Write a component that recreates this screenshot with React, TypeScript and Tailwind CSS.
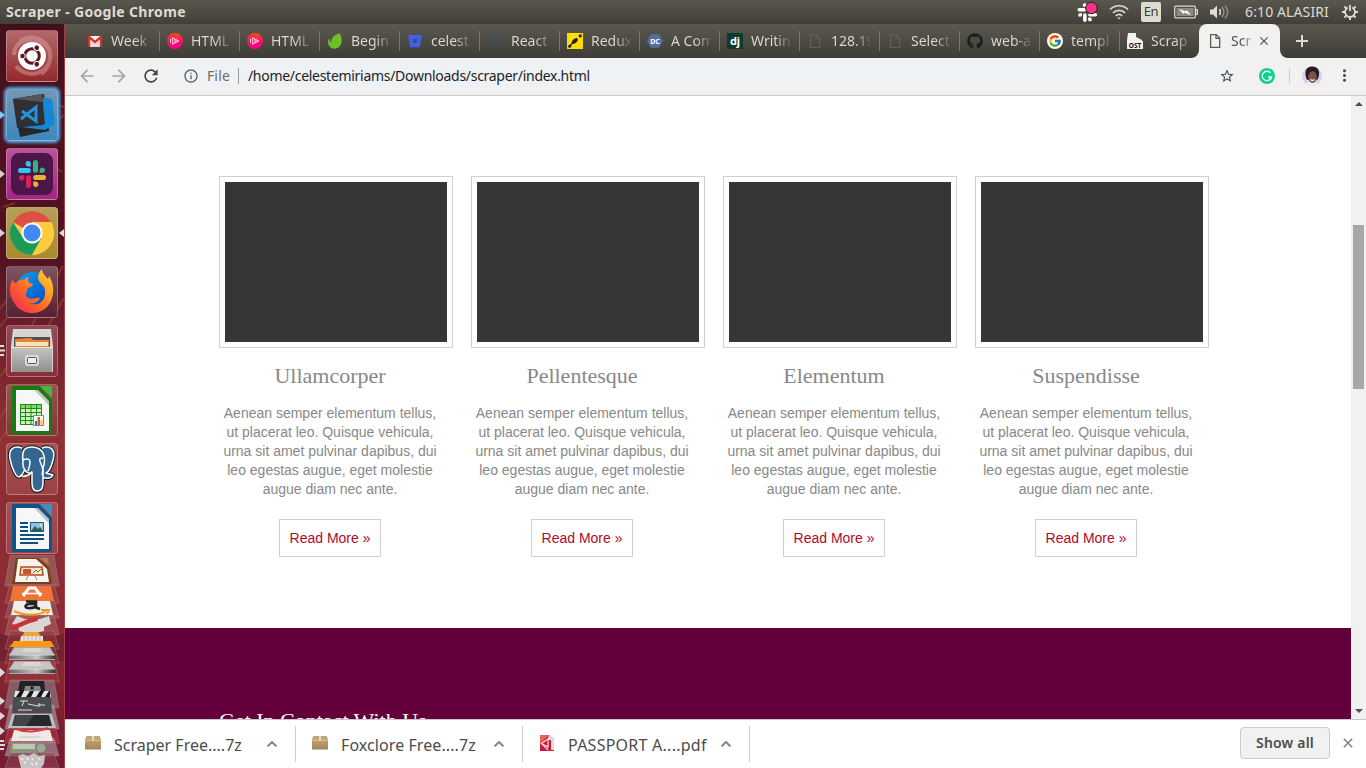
import React from 'react';
import { MdArrowBack, MdArrowForward, MdRefresh, MdStarBorder, MdInfoOutline, MdMoreVert, MdClose } from 'react-icons/md';
import { FaBitbucket, FaGithub, FaReact } from 'react-icons/fa';
import { FcGoogle } from 'react-icons/fc';

const SlackMark = ({ mono = false }: { mono?: boolean }) => {
  const c = mono ? ['#fff', '#fff', '#fff', '#fff'] : ['#36c5f0', '#2eb67d', '#ecb22e', '#e01e5a'];
  return (
    <g>
      {[0, 90, 180, 270].map((r, i) => (
        <g key={r} transform={`rotate(${r} 14 14)`} fill={c[i]}>
          <rect x="0" y="8" width="12.8" height="5" rx="2.5" />
          <path d="M12.8 6.4V3a2.700 2.700 0 1 0-2.700 3.400z" />
        </g>
      ))}
    </g>
  );
};

const GmailIcon = () => (
  <svg viewBox="0 0 16 16" className="size-4">
    <path d="M1 3h14v11H1z" fill="#f4f2f0" />
    <path d="M3.500 6l4.500 4 4.500-4v8H3.500z" fill="#dedbd8" />
    <path d="M1 14V2.800h1.500L8 7.500l5.500-4.700H15V14h-2.200V6.500L8 10.500l-4.800-4V14z" fill="#d93025" />
  </svg>
);
const PinkIcon = () => (
  <svg viewBox="0 0 16 16" className="size-4">
    <defs><linearGradient id="pk" x2="0" y2="1"><stop stopColor="#ff4a1c" /><stop offset=".6" stopColor="#f9087c" /></linearGradient></defs>
    <circle cx="8" cy="8" r="8" fill="url(#pk)" />
    <path d="M3.500 5.800v4.400M5.700 4.500v7M5.700 5l6.300 3-6.300 3M8 6v4M8 8h3" stroke="#ffe2ee" strokeWidth=".9" fill="none" />
  </svg>
);
const LeafIcon = () => (
  <svg viewBox="0 0 16 16" className="size-4">
    <path d="M12.800.4c1.800 3 3 8.800.2 12.600-2.500 3.400-7.700 3.800-10.300.6C.5 10.800.7 7.500 2.600 5c.5 2 .5 3.500 1.400 5C4.100 4.500 8.200 1 12.800.4z" fill="#6fbf2c" />
  </svg>
);
const ReduxIcon = () => (
  <svg viewBox="0 0 16 16" className="size-4">
    <path d="M0 0h16v16H0z" fill="#ffdd00" />
    <path d="M2.200 13.800l5-5.500 3-3" stroke="#222" strokeWidth="1.500" fill="none" />
    <circle cx="2.600" cy="13.200" r="1.500" fill="#222" />
    <ellipse cx="7.800" cy="8" rx="3.300" ry="2" transform="rotate(-42 7.800 8)" fill="#222" />
    <circle cx="13.200" cy="2.900" r="1.600" fill="#222" />
  </svg>
);
const DcIcon = () => (
  <svg viewBox="0 0 16 16" className="size-4">
    <path d="M4 1.200h8L16 8l-4 6.800H4L0 8z" fill="#54709f" />
    <text x="8" y="10.600" textAnchor="middle" fontSize="7" fontWeight="700" fill="#fff" fontFamily="Noto Sans, sans-serif">DC</text>
  </svg>
);
const DjangoIcon = () => (
  <svg viewBox="0 0 16 16" className="size-4">
    <path d="M0 0h16v16H0z" fill="#0c3c2d" />
    <text x="8" y="11.500" textAnchor="middle" fontSize="11" fontWeight="700" fill="#fff" fontFamily="Noto Sans, sans-serif">dj</text>
  </svg>
);
const PageIcon = ({ color }: { color: string }) => (
  <svg viewBox="0 0 16 16" className="size-4 shrink-0" fill="none" stroke={color} strokeWidth="1.300">
    <path d="M3.600 1.600h5.600l3.500 3.500v9.300H3.600zM9 1.600v3.700h3.700" />
  </svg>
);
const OstIcon = () => (
  <svg viewBox="0 0 16 16" className="size-4">
    <path d="M1 0h8v4l6 3v9H0V7z" fill="#f2f2f0" />
    <path d="M0 8h16v8H0z" fill="#f2f2f0" />
    <text x="8" y="14.500" textAnchor="middle" fontSize="6.500" fontWeight="700" fill="#111" fontFamily="Noto Sans, sans-serif">OST</text>
  </svg>
);

const tabs: { text: string; icon: React.ReactNode }[] = [
  { text: 'Week', icon: <GmailIcon /> },
  { text: 'HTML', icon: <PinkIcon /> },
  { text: 'HTML', icon: <PinkIcon /> },
  { text: 'Begin', icon: <LeafIcon /> },
  { text: 'celest', icon: <FaBitbucket className="size-[14px] text-[#3f5ff0]" /> },
  { text: 'React', icon: <FaReact className="size-4 text-[#45505a]" /> },
  { text: 'Redux', icon: <ReduxIcon /> },
  { text: 'A Com', icon: <DcIcon /> },
  { text: 'Writin', icon: <DjangoIcon /> },
  { text: '128.19', icon: <PageIcon color="#5f5e58" /> },
  { text: 'Select', icon: <PageIcon color="#5f5e58" /> },
  { text: 'web-a', icon: <FaGithub className="size-4 text-[#1d1e1d]" /> },
  { text: 'templ', icon: <span className="flex size-4 items-center justify-center rounded-full bg-white"><FcGoogle className="size-[14px]" /></span> },
  { text: 'Scrap', icon: <OstIcon /> },
];

function TopBar() {
  return (
    <header className="flex h-6 shrink-0 items-center bg-linear-to-b from-[#59574d] to-[#403f3a] pr-2 pl-1.5 text-[#dfdbd2]">
      <h1 className="text-[14px] leading-6 font-bold tracking-[0.34px] whitespace-nowrap">Scraper - Google Chrome</h1>
      <div className="ml-auto flex items-center">
        <svg viewBox="0 0 22 22" className="mr-[10px] h-[22px] w-[22px]">
          <g transform="translate(.5 1.500) scale(.7)"><SlackMark mono /></g>
          <circle cx="14.500" cy="7" r="5.800" fill="#ff2f86" stroke="#1d1c1a" strokeWidth="1" />
        </svg>
        <svg viewBox="0 0 20 16" className="mr-3 h-4 w-5" fill="none" stroke="#dfdbd2" strokeWidth="1.700">
          <path d="M1 5.500c5-5 13-5 18 0M4 8.800c3.500-3.200 8.500-3.200 12 0M6.800 11.800c2-1.800 4.400-1.800 6.400 0" />
          <path d="M8.300 13.500L10 15.500l1.700-2z" fill="#dfdbd2" stroke="none" />
        </svg>
        <span className="mr-[13px] flex h-5 w-5 items-center justify-center rounded-[2px] bg-[#dfdbd2] text-[13px] tracking-[-0.5px] text-[#3c3b37]">En</span>
        <svg viewBox="0 0 24 14" className="mr-[11px] h-[14px] w-6">
          <rect x=".7" y="1.200" width="20.600" height="11.600" rx="1" fill="none" stroke="#dfdbd2" strokeWidth="1.200" />
          <rect x="2.500" y="3" width="17" height="8" fill="#8b8981" />
          <path d="M22 4.500h1.500v5H22z" fill="none" stroke="#dfdbd2" />
          <path d="M5 4l7 2.500L12.500 5 17 10l-7-2.500L9.500 9z" fill="#fff" />
        </svg>
        <svg viewBox="0 0 20 16" className="mr-4 h-4 w-5" fill="none" strokeWidth="1.500">
          <path d="M1 5.500h3l4-4v13l-4-4H1z" fill="#dfdbd2" />
          <path d="M10.500 5c1.200 2 1.200 4 0 6" stroke="#dfdbd2" />
          <path d="M13 3c2.300 3 2.300 7 0 10M16 1.500c3.300 4 3.300 9 0 13" stroke="#908e85" />
        </svg>
        <span className="mr-[13px] w-[84px] pb-0.5 text-[14px] tracking-[0.12px] whitespace-nowrap">6:10 ALASIRI</span>
        <svg viewBox="0 0 16 16" className="size-4" fill="none" stroke="#dfdbd2">
          <path d="M5.800 3.500a5 5 0 1 0 4.400 0" strokeWidth="1.800" />
          <path d="M8 1v6" strokeWidth="1.800" />
          <path d="M0 8h3M13 8h3M2.300 13.700l2-2M13.700 13.700l-2-2M2.300 2.300l2 2M13.700 2.300l-2 2M8 13v3" strokeWidth="1.900" />
        </svg>
      </div>
    </header>
  );
}

function TabStrip() {
  return (
    <div className="flex h-[34px] shrink-0 items-stretch bg-linear-to-b from-[#5b594e] to-[#3d3c38] pl-[14px]">
      {tabs.map((t, i) => (
        <div key={i} className="relative flex w-20 items-center pl-2">
          {i > 0 && <span className="absolute top-[7px] left-0 h-5 w-px bg-[#77756c]" />}
          <span className="flex w-4 shrink-0 justify-center">{t.icon}</span>
          <span className="ml-2 w-10 bg-linear-to-r from-[#dfdbd2] from-60% to-[#dfdbd2]/10 bg-clip-text pb-px text-[14px] whitespace-nowrap text-transparent">{t.text}</span>
        </div>
      ))}
      <div className="relative flex w-[81px] items-center rounded-t-lg bg-[#f2f1f0] pl-2">
        <svg viewBox="0 0 8 8" className="absolute bottom-0 -left-2 size-2"><path d="M8 0v8H0a8 8 0 0 0 8-8" fill="#f2f1f0" /></svg>
        <svg viewBox="0 0 8 8" className="absolute -right-2 bottom-0 size-2"><path d="M0 0v8h8a8 8 0 0 1-8-8" fill="#f2f1f0" /></svg>
        <PageIcon color="#5b5b5b" />
        <span className="ml-2 w-[21px] bg-linear-to-r from-[#4c4c4c] from-50% to-[#4c4c4c]/30 bg-clip-text pb-px text-[14px] text-transparent">Scr</span>
        <MdClose className="ml-[5px] size-[14px] text-[#4c4c4c]" />
      </div>
      <svg viewBox="0 0 12 12" className="ml-4 size-3 self-center" stroke="#dfdbd2" strokeWidth="2"><path d="M6 0v12M0 6h12" /></svg>
    </div>
  );
}

function Toolbar() {
  return (
    <div className="flex h-[38px] shrink-0 items-center border-b border-[#cccbca] bg-[#f2f1f0] pr-3 pb-0.5 pl-3">
      <MdArrowBack className="size-5 text-[#a6a5a4]" />
      <MdArrowForward className="ml-3 size-5 text-[#a6a5a4]" />
      <MdRefresh className="ml-3 size-5 text-[#454545]" />
      <div className="ml-3 flex h-[31px] w-[1071px] items-center rounded-full bg-[#eef2f4] pr-2 pl-2 text-[14px]">
        <MdInfoOutline className="ml-[2px] size-4 text-[#5f6368]" />
        <span className="ml-2 w-6 tracking-[0.15px] text-[#6b6c6d]">File</span>
        <span className="ml-[7px] h-4 w-px bg-[#9a9c9e]" />
        <span className="ml-[9px] tracking-[-0.29px] whitespace-nowrap text-[#222]">/home/celestemiriams/Downloads/scraper/index.html</span>
        <MdStarBorder className="ml-auto size-4 text-[#454545]" />
      </div>
      <svg viewBox="0 0 16 16" className="ml-4 size-4 shrink-0">
        <circle cx="8" cy="8" r="8" fill="#0fcf93" />
        <path d="M11.500 4.800A4.700 4.700 0 1 0 12.600 9H9.200M11 11.500V9" fill="none" stroke="#fff" strokeWidth="1.300" />
      </svg>
      <span className="ml-[14px] h-4 w-px bg-[#cfcecd]" />
      <svg viewBox="0 0 20 20" className="ml-3 size-5 shrink-0">
        <defs><clipPath id="av"><circle cx="10" cy="10" r="10" /></clipPath></defs>
        <g clipPath="url(#av)">
          <path d="M0 0h20v20H0z" fill="#d8cff0" />
          <path d="M4 20c0-4 3-5 6-5s6 1 6 5z" fill="#eee9f8" />
          <path d="M3.500 8C3 2.500 7 .3 10.500.5 15 .3 18 4 17 9c-.4 3-1.500 5-3 5H6c-1.500 0-2.200-3-2.500-6z" fill="#251c22" />
          <ellipse cx="10.500" cy="11" rx="4.300" ry="6" fill="#80504a" />
          <path d="M6 8c2-3 6-4 8.500-2V3H6z" fill="#251c22" />
          <path d="M8 13c2 1 4 1 5 0-1 3-4 3-5 0" fill="#fff" />
        </g>
      </svg>
      <MdMoreVert className="ml-[13px] size-[19px] shrink-0 text-[#4b4b4b]" />
    </div>
  );
}

const cards = ['Ullamcorper', 'Pellentesque', 'Elementum', 'Suspendisse'];

function Page() {
  return (
    <div className="flex h-[623px] shrink-0 bg-white">
      <main className="flex-1 overflow-hidden">
        <section className="flex h-[532px] gap-[18px] pt-20 pl-[154px]">
          {cards.map((c) => (
            <article key={c} className="w-[234px]">
              <div className="h-[172px] border border-[#d0d0d0] p-[5px]"><div className="h-40 bg-[#363636]" /></div>
              <div className="flex w-[222px] flex-col items-center">
                <h2 className="mt-[15px] font-['Liberation_Serif',serif] text-[22px] leading-[26px] text-[#888]">{c}</h2>
                <p className="mt-[15px] text-center font-['Liberation_Sans',sans-serif] text-[14px] leading-[19px] text-[#888]">
                  Aenean semper elementum tellus, ut placerat leo. Quisque vehicula, urna sit amet pulvinar dapibus, dui leo egestas augue, eget molestie augue diam nec ante.
                </p>
                <a className="mt-5 flex h-[38px] w-[102px] items-center justify-center border border-[#d0d0d0] font-['Liberation_Sans',sans-serif] text-[14px] text-[#b30a28]">Read More »</a>
              </div>
            </article>
          ))}
        </section>
        <section className="h-[91px] overflow-hidden bg-[#63003c] pt-20 pl-[154px]">
          <h2 className="font-['Liberation_Serif',serif] text-[22px] leading-[26px] text-white">Get In Contact With Us</h2>
        </section>
      </main>
      <div className="flex w-[15px] flex-col items-center bg-[#f1f1f1] py-1.5">
        <svg viewBox="0 0 8 4" className="h-1 w-2"><path d="M0 4l4-4 4 4z" fill="#505050" /></svg>
        <div className="mt-[119px] h-[164px] w-[11px] bg-[#a8a8a8]" />
        <svg viewBox="0 0 8 4" className="mt-auto h-1 w-2"><path d="M0 0l4 4 4-4z" fill="#505050" /></svg>
      </div>
    </div>
  );
}

const BoxIcon = () => (
  <svg viewBox="0 0 16 16" className="size-4">
    <defs><linearGradient id="bx" x2="0" y2="1"><stop stopColor="#c8ad7c" /><stop offset="1" stopColor="#a38655" /></linearGradient></defs>
    <path d="M1.500 1h13L16 5v9.500H0V5z" fill="url(#bx)" />
    <path d="M1.500 1h13L16 5H0z" fill="#c2a778" />
    <path d="M0 5.500h16" stroke="#d5bd8f" />
    <path d="M7 1h2v5H7z" fill="#e5d7b8" />
  </svg>
);
const PdfIcon = () => (
  <svg viewBox="0 0 16 16" className="size-4">
    <path d="M1 0h9l5 4v12H1z" fill="#cf1737" />
    <path d="M1 0h9L1 9z" fill="#e96352" />
    <path d="M10 0l5 4v11h-3V5H9V3z" fill="#dedede" />
    <path d="M2.500 8.500L9 4v8z" fill="none" stroke="#f5dede" strokeWidth="1.200" />
    <path d="M2.500 8.500L9 15" stroke="#f5dede" strokeWidth="1.200" />
  </svg>
);

function Downloads() {
  const items = [
    { n: 'Scraper Free....7z', i: <BoxIcon />, track: '' },
    { n: 'Foxclore Free....7z', i: <BoxIcon />, track: 'tracking-[0.08px]' },
    { n: 'PASSPORT A....pdf', i: <PdfIcon />, track: 'tracking-[0.25px]' },
  ];
  return (
    <footer className="flex h-[49px] shrink-0 items-center border-t border-[#c8c8c8] bg-white pl-1">
      {items.map((d) => (
        <div key={d.n} className="flex h-9 w-[227px] items-center border-r border-[#cfcfcf] pr-[18px] pl-4">
          <span className="mb-[3px]">{d.i}</span>
          <span className={`ml-[13px] pt-0.5 text-[16px] whitespace-nowrap text-[#4c4c4c] ${d.track}`}>{d.n}</span>
          <svg viewBox="0 0 10 6" className="ml-auto h-1.5 w-2.5" fill="none" stroke="#858585" strokeWidth="2"><path d="M.6 5.400L5 1l4.400 4.400" /></svg>
        </div>
      ))}
      <button className="mr-2.5 mb-[2px] ml-auto h-8 w-[90px] rounded border border-[#ccc] bg-[#f1f1f1] pb-0.5 text-[14px] font-semibold tracking-[0.2px] text-[#4c4c4c]">Show all</button>
      <MdClose className="mr-[10px] mb-0.5 size-4 text-[#777]" />
    </footer>
  );
}

const Ubuntu = () => (
  <g>
    <path d="M8 25C8 9 30 3 42 18c5 9 1 20-7 26M44 28c-1 16-23 22-34 8M14 11C27 2 47 12 44 29" fill="none" stroke="#e0a9a5" strokeWidth="4" opacity=".45" />
    <circle cx="26" cy="26" r="14" fill="#fff" />
    <circle cx="26" cy="26" r="7.300" fill="none" stroke="#5b1a1d" strokeWidth="3" />
    {[60, 180, 300].map((r) => (
      <g key={r} transform={`rotate(${r} 26 26)`}>
        <circle cx="35.500" cy="26" r="2.800" fill="#5b1a1d" stroke="#fff" />
      </g>
    ))}
  </g>
);
const VsCode = () => (
  <g>
    <path d="M36 8l10 2 2 25-11 5z" fill="#1a8fe0" />
    <path d="M7 10l31-5 5 37-29 6z" fill="#262628" />
    <path d="M15 38l22-2V8l9 3 3 24-10 6z" fill="#1686d5" />
    <path d="M7 10l29-5 3 30-28 4z" fill="#303033" />
    <path d="M8 10l28-5 1 8z" fill="#55565a" />
    <path d="M16 22l14 10V18L15 30" fill="none" stroke="#2493de" strokeWidth="3" />
  </g>
);
const Slack = () => (
  <g><rect x="5" y="5" width="42" height="42" rx="8" fill="#4a1748" /><g transform="translate(12 12)"><SlackMark /></g></g>
);
const Chrome = () => (
  <g>
    <circle cx="26" cy="26" r="22" fill="#fbcb43" />
    <path d="M26 26L6.900 15A22 22 0 0 1 45 15H26z" fill="#dd5144" />
    <path d="M6.900 15A22 22 0 0 0 26 48l9.500-17L26 26l-9 5z" fill="#1a9b58" />
    <path d="M26 15h19a22 22 0 0 1-19 33l10-16z" fill="#fdcb40" />
    <circle cx="26" cy="26" r="10.500" fill="#fff" /><circle cx="26" cy="26" r="8.500" fill="#4688f1" />
  </g>
);
const Firefox = () => (
  <g>
    <defs>
      <linearGradient id="ff" x1="0" y1="1" x2="1" y2="0"><stop stopColor="#ed1c63" /><stop offset=".45" stopColor="#ff6b24" /><stop offset="1" stopColor="#ffe12f" /></linearGradient>
      <linearGradient id="fb" x2="1" y2="1"><stop stopColor="#0aa5f5" /><stop offset="1" stopColor="#0c41b5" /></linearGradient>
    </defs>
    <circle cx="27" cy="23" r="17" fill="url(#fb)" />
    <path d="M7 13c0 3 1 4 3 4 2-3 5-4 8-3 1-2 3-3 5-3-2 3-1 6 4 7-1 4-6 3-6 6-1 3-2 5 0 7 4 4 10 0 13 1-3 6-9 6-11 5 8 4 17-1 16-12 0-6-6-7-7-13-.3-3 1-6 4-9 0 5 4 7 6 10l1-3c6 9 6 22-2 31-9 9-25 8-32-3C3 30 2 21 7 13z" fill="url(#ff)" />
  </g>
);
const Files = () => (
  <g>
    <defs><linearGradient id="fl" x2="0" y2="1"><stop stopColor="#c4c4c2" /><stop offset="1" stopColor="#8f8f8d" /></linearGradient></defs>
    <path d="M7 4h38l2 17v26H5V21z" fill="#d5d5d3" />
    <path d="M8 12h36v11H8z" fill="#51504d" />
    <path d="M9 14l16-1 2 2h16v8H9z" fill="#e7863a" /><path d="M10 17h32v4H10z" fill="#fae1bd" />
    <path d="M6 22h40v25H6z" fill="url(#fl)" /><path d="M6 22h40v1H6z" fill="#ecebe8" />
    <rect x="19" y="30" width="14" height="11" rx="2" fill="#d9d9d6" /><rect x="21.500" y="32.500" width="9" height="6" rx="1" fill="#eee" stroke="#555" />
  </g>
);
const Doc = ({ color, light }: { color: string; light: string }) => (
  <g>
    <path d="M8 2h25l13 14v32q0 2-2 2H8q-2 0-2-2V4q0-2 2-2z" fill={color} />
    <path d="M34 2h12v12z" fill={light} />
    <path d="M10 6h19l14 15v26H10z" fill="#f7f7f7" />
    <path d="M29 6l14 15v-4L32 6z" fill="#c4c8c6" />
  </g>
);
const Calc = () => (
  <g>
    <Doc color="#157c12" light="#47b348" />
    <path d="M14 20h22v21H14z" fill="#cdf2bf" /><path d="M14 20h22v4H14z" fill="#86d46e" />
    <path d="M14.500 20.500h21v20h-21zM14 24.500h22M14 28.500h22M14 32.500h22M14 36.500h22M19.500 20v21M25 20v21M30.500 20v21" fill="none" stroke="#198c17" />
    <path d="M27.500 31.500h10v10h-10z" fill="#fff" stroke="#888" /><path d="M29 37h2v4h-2z" fill="#1d76bd" /><path d="M31.500 33h2.500v8h-2.500z" fill="#e45a1b" /><path d="M34.500 36h2v5h-2z" fill="#f4c020" />
  </g>
);
const Postgres = () => (
  <g fill="#336791" stroke="#fff" strokeWidth="1.500" strokeLinejoin="round">
    <g stroke="#15161a" strokeWidth="3.500"><path d="M16 5C8 2 2 6 4 16s6 18 9 18 4-4 6-8M36 5c9-3 14 2 11 12-2 8-4 12-7 13 3 1 5 1 7 2-2 4-7 4-11 2M17 18c-1-9 0-14 9-14 13 0 14 13 11 21v13c0 7-1 10-6 10-4 0-5-3-5-8V29c-4 4-10-3-9-11z" /></g>
    <path d="M16 5C8 2 2 6 4 16s6 18 9 18 4-4 6-8M36 5c9-3 14 2 11 12-2 8-4 12-7 13 3 1 5 1 7 2-2 4-7 4-11 2" />
    <path d="M17 18c-1-9 0-14 9-14 13 0 14 13 11 21v13c0 7-1 10-6 10-4 0-5-3-5-8V29c-4 4-10-3-9-11z" />
    <path d="M17 17c4-2 7-1 7 2s-1 6-2 9M37 15c-4 0-4 2-2 6s2 8 1 11M14 32c4 3 10 0 12-3" fill="none" />
  </g>
);
const Writer = () => (
  <g>
    <Doc color="#0d5586" light="#3c91c4" />
    <path d="M14 21h8M14 25h8M14 29h8M14 33h24M14 37h24M14 41h18" stroke="#0b507e" strokeWidth="2" />
    <path d="M24.500 20.500h13v9h-13z" fill="#8bc4ec" stroke="#17577f" /><path d="M25 29l4-5 3 3 2-2 3 4z" fill="#355c4c" /><circle cx="35" cy="23" r="1.300" fill="#ffdf44" />
  </g>
);

function FoldedStack() {
  const plates = [
    [0, 31, '#97706b'], [30, 18, '#a04a45'], [45, 18, '#9a5a58'], [60, 20, '#a65f60'], [76, 18, '#8f3a40'],
    [90, 18, '#7d3440'], [104, 23, '#a23940'], [125, 28, '#8b8487'], [150, 24, '#aaa3a7'],
    [166, 22, '#b0343a'], [183, 18, '#a8a0a0'], [198, 15, '#8c4450'],
  ] as const;
  return (
    <svg viewBox="0 0 64 213" className="h-[213px] w-16 shrink-0">
      <defs>
        <linearGradient id="dk" x2="1"><stop stopColor="#666" /><stop offset=".6" stopColor="#c8c8c8" /><stop offset="1" stopColor="#333" /></linearGradient>
      </defs>
      {plates.map(([y, h, c], i) => (
        <path key={i} d={`M10 ${y}h44l5 ${h}H5z`} fill={c} fillOpacity=".6" stroke="#d3a3a3" strokeOpacity=".3" />
      ))}
      <path d="M16 3h22l11 9 3 17H12z" fill="#7d3f18" /><path d="M40 3h8l1 8z" fill="#b5794c" /><path d="M18 4h18l11 10 2 13H15z" fill="#f7f4ef" />
      <path d="M21 12h21l1 8H20z" fill="#f7e2d4" stroke="#b84a1b" strokeWidth="1.500" /><path d="M23 14h8v5h-8z" fill="#c9532b" /><path d="M33 18l3-3 2 2 3-3" stroke="#318a37" fill="none" /><path d="M28 21l-2 4M35 21l2 4" stroke="#888" />
      <path d="M13 31h38l3 15H10z" fill="#ee7438" /><path d="M23 41l6-8h6l6 8" stroke="#fff" strokeWidth="3" fill="none" /><path d="M22 38.500h20" stroke="#fff" strokeWidth="1.500" />
      <path d="M14 46h36l3 14H11z" fill="#eee" />
      <path d="M26 46.500h10v6l4 1.500M36 49h-6c-5 0-6 4-2 4 4 .5 6 0 8-2" fill="none" stroke="#222" strokeWidth="2.600" />
      <path d="M14 56c10 5 25 5 32 0m-5-1h8l-2 4" fill="none" stroke="#f49a19" strokeWidth="2" />
      <path d="M17 61l8 3h15l9-3 2 8-7 3v4l-8 2h-9l-8-2-1-5-6-2z" fill="#d9d6d3" /><path d="M13 72c7-1 13-6 23-8" stroke="#c93338" strokeWidth="4.500" strokeLinecap="round" />
      <path d="M25 77h13l3 4H22z" fill="#f3a33c" /><path d="M21 81h22v5H20z" fill="#e8e4dc" /><path d="M24 81v5M28 81v5M32 81v5M36 81v5M40 81v5" stroke="#bbb7b0" /><path d="M14 86h37l3 6H10z" fill="#fb9715" />
      {[92, 106].map((y) => <g key={y}><path d={`M14 ${y}h36l5 8v5H9v-5z`} fill="#a9a9a9" /><path d={`M15 ${y + 1}h34l4 6H11z`} fill="#c6c5c3" /><path d={`M24 ${y + 1}h16l2 4H22z`} fill="#d8d7d5" /><path d={`M9 ${y + 8}h46v4H9z`} fill="url(#dk)" /><path d={`M9 ${y + 8}h46`} stroke="#eee" strokeWidth=".8" /></g>)}
      <path d="M20 126h24l1 10H18z" fill="#202123" /><path d="M25 131h15l1 5H24z" fill="#85888c" /><circle cx="32" cy="133" r="1.800" fill="#222" />
      <path d="M14 136h36l2 22H12z" fill="#4a4b4e" /><path d="M15 136h35l1 6H14z" fill="#e6e6e6" /><path d="M16 142l4-6h4l-3 6zm10 0l4-6h4l-3 6zm10 0l4-6h4l-3 6zm9 0l4-6h1v6z" fill="#161616" /><path d="M20 146h8M24 146l-2 5M28 149l10 2M39 148v4M18 155h14M38 150h7" stroke="#ddd" fill="none" />
      <path d="M12 159h40l4 14H8z" fill="#bbbdc0" /><path d="M15 160h34l3 11H12z" fill="#26282b" /><path d="M16 160h18l-8 11H12z" fill="#424447" />
      <path d="M14 175h36l3 11H11z" fill="#eee8e8" /><path d="M16 174c10 4 23 3 32-1" fill="none" stroke="#d93b44" strokeWidth="2" /><path d="M19 182h22" stroke="#c9c3c3" />
      <path d="M11 188h33v10H10z" fill="#8f967e" /><path d="M13 189h22v5H13z" fill="#c0c5b4" /><circle cx="41" cy="193" r="5" fill="#a1a69a" stroke="#72776a" />
      <path d="M18 201l5-2 5 2 6-3 5 3 6-1-1 9-3 4H21z" fill="#c9c4c3" /><path d="M21 203l2 2M27 202l1 3M33 203l-1 2M39 203l1 2M24 208l2-1M31 208l2 2M37 207l-1 3" fill="none" stroke="#f0eded" strokeWidth="1.500" />
    </svg>
  );
}

const apps = [
  { bg: 'bg-linear-to-b from-[#b3686b] to-[#93292f]', icon: <Ubuntu /> },
  { bg: 'bg-linear-to-b from-[#7497b0] to-[#3b87bd] shadow-[0_0_3px_2px_#4ba6ea]', icon: <VsCode />, mark: '#83c7ed' },
  { bg: 'bg-linear-to-b from-[#bb5395] to-[#a42487]', icon: <Slack />, mark: '#d8cdd0' },
  { bg: 'bg-linear-to-b from-[#b5a05a] to-[#a78b2c]', icon: <Chrome />, mark: '#d8cdd0', open: true },
  { bg: 'bg-linear-to-b from-[#7d5560] to-[#572030]', icon: <Firefox /> },
  { bg: 'bg-linear-to-b from-[#8f4d56] to-[#8c2b3b]', icon: <Files />, lines: true },
  { bg: 'bg-linear-to-b from-[#965452] to-[#7e3a31]', icon: <Calc /> },
  { bg: 'bg-linear-to-b from-[#a35355] to-[#9b4243]', icon: <Postgres /> },
  { bg: 'bg-linear-to-b from-[#a45056] to-[#99424b]', icon: <Writer /> },
];

function Launcher() {
  return (
    <aside className="relative flex w-[65px] shrink-0 flex-col border-r border-[#a63d42] bg-linear-to-b from-[#42101b] from-0% via-[#561322] via-35% to-[#6d1730] pt-1.5">
      <svg viewBox="0 0 64 744" className="absolute top-0 left-0 h-[744px] w-16" fill="none">
        <defs><linearGradient id="wp" x2="0" y2="1"><stop stopColor="#8e3034" stopOpacity="0" /><stop offset=".35" stopColor="#8e3034" /><stop offset=".75" stopColor="#8b2a35" /><stop offset="1" stopColor="#8b2a35" stopOpacity=".2" /></linearGradient></defs>
        <path d="M0 235h64v509H0z" fill="url(#wp)" />
        <path d="M52 86l4-6 8 3M56 98l8-7M54 143l8 5M3 183l12-4M0 285l29-39M0 303l43-57M28 309l35-67M0 353l34-49M39 318l25-44M0 394l12-20M0 417l8-12" stroke="#a75535" strokeWidth="2" opacity=".45" />
        <path d="M0 610h64v27H0z" fill="#5b182a" opacity=".45" />
      </svg>
      <div className="relative flex flex-col gap-[7px]">
        {apps.map((a, i) => (
          <div key={i} className={`relative ml-1.5 h-[52px] w-[52px] rounded-[4px] border border-white/25 ${a.bg}`}>
            <svg viewBox="1 1 50 50" className="h-full w-full">{a.icon}</svg>
            {a.mark && <svg viewBox="0 0 5 8" className="absolute top-[21px] -left-[7px] h-2 w-[5px]"><path d="M0 0l5 4-5 4z" fill={a.mark} /></svg>}
            {a.open && <svg viewBox="0 0 5 8" className="absolute top-[21px] -right-[7px] h-2 w-[5px]"><path d="M5 0L0 4l5 4z" fill="#ddd" /></svg>}
            {a.lines && <svg viewBox="0 0 5 11" className="absolute top-[19px] -left-[7px] h-[11px] w-[5px]" stroke="#ddd" strokeWidth="2"><path d="M0 1h4M0 5.500h5M0 10h4" /></svg>}
          </div>
        ))}
      </div>
      <div className="relative mt-px"><FoldedStack /></div>
      <svg viewBox="0 0 5 100" className="absolute bottom-0 left-0 h-[100px] w-[5px]" fill="#ddd8d9">
        <path d="M0 0l5 4.500-5 4.500zM0 29l5 4-5 4zM0 44l5 4-5 4zM0 59l5 4-5 4zM0 72h4v2H0zM0 76h5v2H0zM0 80h4v2H0z" />
      </svg>
    </aside>
  );
}

export default function App() {
  return (
    <div className="flex h-[768px] w-[1366px] flex-col overflow-hidden bg-white font-['Noto_Sans','Open_Sans',sans-serif]">
      <TopBar />
      <div className="flex h-[744px]">
        <Launcher />
        <div className="flex min-w-0 flex-1 flex-col">
          <TabStrip />
          <Toolbar />
          <Page />
          <Downloads />
        </div>
      </div>
    </div>
  );
}
